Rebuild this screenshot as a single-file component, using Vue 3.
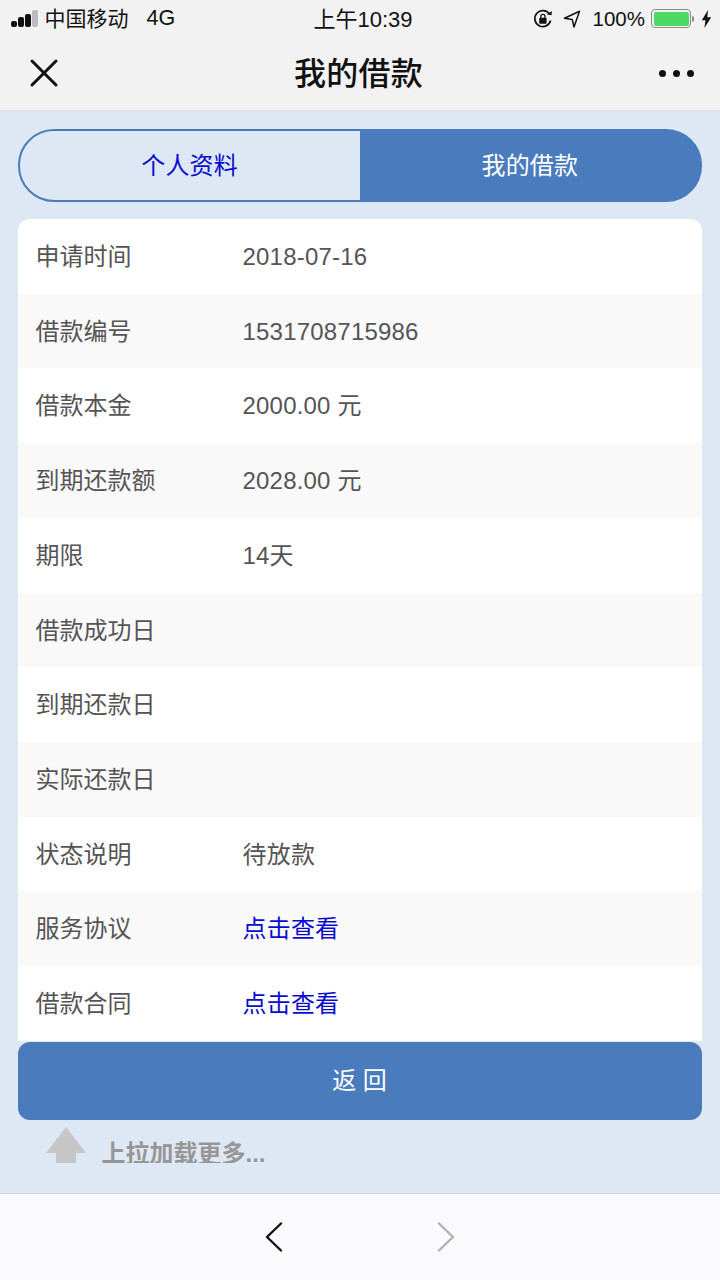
<template>
  <div class="page">
    <div class="statusBar">
      <div class="statusLeft">
        <div class="signal">
          <span class="bar b1"></span>
          <span class="bar b2"></span>
          <span class="bar b3"></span>
          <span class="bar b4"></span>
        </div>
        <span class="carrier">中国移动</span>
        <span class="net">4G</span>
      </div>
      <div class="clock">上午10:39</div>
      <div class="statusRight">
        <svg class="lockIcon" width="20" height="20" viewBox="0 0 20 20">
          <path d="M17.6 11.5A8 8 0 1 1 16.4 5" fill="none" stroke="#111" stroke-width="1.7" />
          <path d="M14 5.6l4.6.6.2-4.2z" fill="#111" />
          <rect x="6.2" y="8.8" width="7.4" height="6" rx="1" fill="#111" />
          <path d="M7.8 9V7.4a2.1 2.1 0 0 1 4.2 0V9" fill="none" stroke="#111" stroke-width="1.3" />
        </svg>
        <svg class="arrowIcon" width="18" height="20" viewBox="0 0 18 20">
          <path d="M1.5 9.2L16.5 2.2 11 18 9.2 10.4z" fill="none" stroke="#111" stroke-width="1.5" stroke-linejoin="round" />
        </svg>
        <span class="percent">100%</span>
        <div class="battery">
          <div class="batteryFill"></div>
        </div>
        <span class="batteryTip"></span>
        <svg class="bolt" width="11" height="18" viewBox="0 0 11 18">
          <path d="M7 0L0.8 10.2h3.7L3.4 18l6.8-10.8H6.3z" fill="#111" />
        </svg>
      </div>
    </div>

    <div class="navBar">
      <div class="navSide">
        <svg width="30" height="30" viewBox="0 0 30 30">
          <path d="M3 3L27 27M27 3L3 27" stroke="#111" stroke-width="3" stroke-linecap="round" />
        </svg>
      </div>
      <div class="navTitle">我的借款</div>
      <div class="navSide navMore">
        <span class="dot"></span>
        <span class="dot"></span>
        <span class="dot"></span>
      </div>
    </div>

    <div class="content">
      <div class="tabs">
        <div class="tab tabOff">个人资料</div>
        <div class="tab tabOn">我的借款</div>
      </div>

      <div class="card">
        <div class="row" v-for="(fila, i) in filas" :key="i">
          <div class="rowLabel">{{ fila.label }}</div>
          <div class="rowValue" :class="{ link: fila.link }">{{ fila.value }}</div>
        </div>
      </div>

      <div class="backBtn">返 回</div>

      <div class="pull">
        <svg class="pullArrow" width="40" height="36" viewBox="0 0 40 36">
          <path d="M20 0L40 26H30V36H10V26H0z" fill="#c6c6c6" />
        </svg>
        <div class="pullClip">
          <span class="pullText">上拉加载更多...</span>
        </div>
      </div>
    </div>

    <div class="bottomBar">
      <svg width="18" height="30" viewBox="0 0 18 30">
        <path d="M16 1.5L2 15l14 13.5" fill="none" stroke="#111" stroke-width="2.4" stroke-linecap="round" stroke-linejoin="round" />
      </svg>
      <svg width="18" height="30" viewBox="0 0 18 30">
        <path d="M2 1.5L16 15 2 28.5" fill="none" stroke="#b0b0b0" stroke-width="2.4" stroke-linecap="round" stroke-linejoin="round" />
      </svg>
    </div>
  </div>
</template>

<script setup>
const filas = [
  { label: "申请时间", value: "2018-07-16" },
  { label: "借款编号", value: "1531708715986" },
  { label: "借款本金", value: "2000.00 元" },
  { label: "到期还款额", value: "2028.00 元" },
  { label: "期限", value: "14天" },
  { label: "借款成功日", value: "" },
  { label: "到期还款日", value: "" },
  { label: "实际还款日", value: "" },
  { label: "状态说明", value: "待放款" },
  { label: "服务协议", value: "点击查看", link: true },
  { label: "借款合同", value: "点击查看", link: true },
];
</script>

<style>
html,
body {
  margin: 0;
  padding: 0;
  background: #dee8f4;
}
</style>

<style scoped>
* {
  box-sizing: border-box;
}

.page {
  width: 720px;
  height: 1280px;
  display: flex;
  flex-direction: column;
  overflow: hidden;
  font-family: "Liberation Sans", "Noto Sans CJK SC", sans-serif;
}

.statusBar {
  height: 37px;
  background: #f2f2f2;
  display: grid;
  grid-template-columns: 1fr auto 1fr;
  align-items: center;
  color: #111;
  font-size: 21px;
  padding: 0 8px 0 11px;
}

.statusLeft {
  display: flex;
  align-items: center;
}

.signal {
  display: flex;
  align-items: flex-end;
  gap: 1.5px;
  height: 17px;
  margin-right: 7px;
}

.bar {
  width: 5.5px;
  border-radius: 2px;
  background: #111;
}

.b1 {
  height: 6px;
}

.b2 {
  height: 10px;
}

.b3 {
  height: 13.5px;
}

.b4 {
  height: 17px;
  background: #bcbcbc;
}

.carrier {
  padding-bottom: 4px;
}

.net {
  margin-left: 18px;
  font-size: 21.5px;
}

.clock {
  font-size: 22px;
  margin-left: 3px;
  padding-bottom: 4px;
}

.statusRight {
  display: flex;
  align-items: center;
  justify-content: flex-end;
}

.arrowIcon {
  margin-left: 10.5px;
}

.percent {
  margin-left: 11.5px;
  font-size: 20.5px;
}

.battery {
  width: 40px;
  height: 19px;
  margin-left: 6px;
  border: 1.5px solid #8c8c8c;
  border-radius: 4px;
  padding: 1.5px;
}

.batteryFill {
  height: 100%;
  border-radius: 2px;
  background: #4cd964;
}

.batteryTip {
  width: 2px;
  height: 6px;
  margin-left: 1px;
  background: #8c8c8c;
  border-radius: 0 2px 2px 0;
}

.bolt {
  margin-left: 7px;
}

.navBar {
  height: 74px;
  background: #f2f2f2;
  border-bottom: 1px solid #dcdfe3;
  display: grid;
  grid-template-columns: 100px 1fr 100px;
  align-items: center;
  padding-bottom: 1px;
}

.navSide {
  display: flex;
  align-items: center;
  padding-left: 29px;
}

.navTitle {
  text-align: center;
  font-size: 32px;
  font-weight: 500;
  color: #111;
  margin-left: -3px;
  padding-bottom: 4px;
  letter-spacing: 0.2px;
}

.navMore {
  justify-content: flex-end;
  gap: 7px;
  padding: 0 26px 0 0;
}

.dot {
  width: 7px;
  height: 7px;
  border-radius: 50%;
  background: #111;
}

.content {
  flex: 1;
  background: #dee8f4;
  padding: 18px 18.5px 0 17.5px;
  overflow: hidden;
}

.tabs {
  height: 72.5px;
  margin-bottom: 17.5px;
  display: flex;
  border: 2px solid #497bbd;
  border-radius: 36px;
  margin-right: -0.5px;
  overflow: hidden;
  font-size: 24px;
  background: linear-gradient(to right, transparent 50%, #497bbd 50%);
  background-origin: border-box;
}

.tab {
  flex: 1;
  display: flex;
  align-items: center;
  justify-content: center;
  padding-bottom: 4px;
  letter-spacing: 0.2px;
}

.tabOff {
  color: #0b0bd0;
}

.tabOn {
  color: #fff;
}

.card {
  border-radius: 12px 12px 0 0;
  overflow: hidden;
  background: #fff;
}

.row {
  height: 74.73px;
  display: flex;
  align-items: baseline;
  padding: 18px 18px 0;
  font-size: 24px;
  color: #555;
  background: #fff;
}

.row:nth-child(even) {
  background: #f9f9f9;
}

.rowLabel {
  width: 207px;
  flex-shrink: 0;
}

.rowValue {
  letter-spacing: 0.2px;
}

.link {
  color: #0b0bd0;
}

.backBtn {
  height: 78px;
  margin-top: 1px;
  padding-bottom: 4px;
  border-radius: 12px;
  background: #497bbd;
  color: #fff;
  font-size: 24px;
  display: flex;
  align-items: center;
  justify-content: center;
}

.pull {
  display: flex;
  align-items: flex-end;
  height: 43px;
  padding-left: 28.5px;
}

.pullArrow {
  display: block;
  flex-shrink: 0;
}

.pullClip {
  height: 34px;
  margin-left: 15.5px;
  overflow: hidden;
}

.pullText {
  display: block;
  font-size: 24px;
  line-height: 50px;
  font-weight: 700;
  color: #969696;
}

.bottomBar {
  height: 87px;
  background: #fafafc;
  border-top: 1.5px solid #cfd9e4;
  display: flex;
  align-items: center;
  justify-content: center;
  gap: 154px;
}
</style>
